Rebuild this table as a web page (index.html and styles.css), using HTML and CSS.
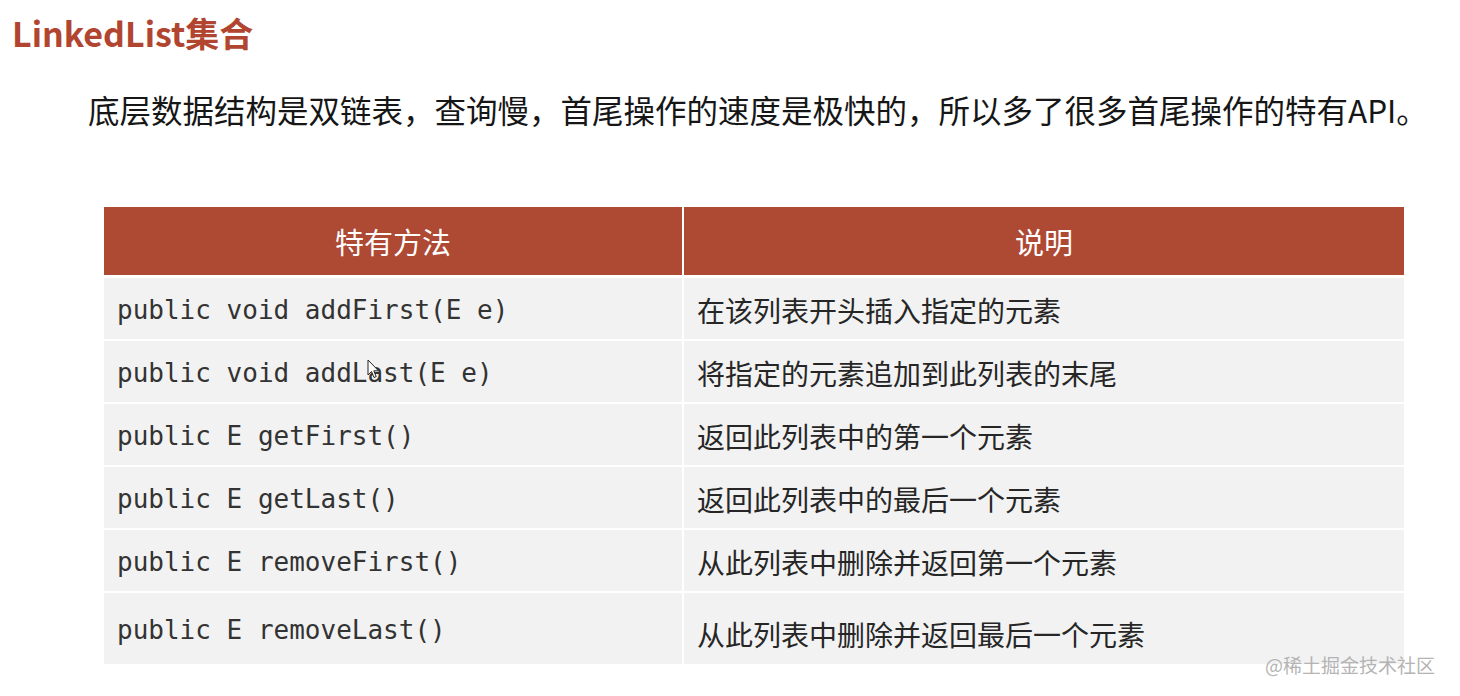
FILE: index.html
```html
<!DOCTYPE html>
<html lang="zh-CN">
<head>
<meta charset="utf-8">
<title>LinkedList集合</title>
<link rel="stylesheet" href="styles.css">
</head>
<body>
<div class="page">
  <h1 class="title">LinkedList集合</h1>
  <p class="lead">底层数据结构是双链表，查询慢，首尾操作的速度是极快的，所以多了很多首尾操作的特有API。</p>
  <div class="table">
    <div class="head">特有方法</div>
    <div class="head">说明</div>

    <div class="cell code">public void addFirst(E e)</div>
    <div class="cell desc">在该列表开头插入指定的元素</div>

    <div class="cell code">public void addLast(E e)</div>
    <div class="cell desc">将指定的元素追加到此列表的末尾</div>

    <div class="cell code">public E getFirst()</div>
    <div class="cell desc">返回此列表中的第一个元素</div>

    <div class="cell code">public E getLast()</div>
    <div class="cell desc">返回此列表中的最后一个元素</div>

    <div class="cell code">public E removeFirst()</div>
    <div class="cell desc">从此列表中删除并返回第一个元素</div>

    <div class="cell code last">public E removeLast()</div>
    <div class="cell desc last">从此列表中删除并返回最后一个元素</div>
  </div>
  <svg class="cursor" width="14" height="21" viewBox="0 0 14 21" aria-hidden="true">
    <path d="M1 1 L1 16 L4.5 12.5 L7 18.5 L9.2 17.6 L6.8 11.8 L11.5 11.8 Z" fill="#ffffff" stroke="#222222" stroke-width="1" stroke-linejoin="round"/>
  </svg>
  <div class="watermark">@稀土掘金技术社区</div>
</div>
</body>
</html>
```

FILE: styles.css
```css
html, body {
  margin: 0;
  padding: 0;
  background: #ffffff;
}

.page {
  position: relative;
  width: 1460px;
  height: 696px;
  overflow: hidden;
  font-family: "Noto Sans CJK SC", "Noto Sans", sans-serif;
}

.title {
  margin: 0;
  padding: 11px 0 0 12px;
  font-size: 34px;
  line-height: 44px;
  font-weight: 700;
  color: #b1452f;
}

.lead {
  margin: 32px 0 0 88px;
  font-size: 31.5px;
  line-height: 44px;
  color: #161616;
  white-space: nowrap;
}

.table {
  margin: 76px 0 0 104px;
  width: 1300px;
  display: grid;
  grid-template-columns: 578px 720px;
  grid-template-rows: 68px 62px repeat(4, 61px) 71px;
  column-gap: 2px;
  row-gap: 2px;
}

.head {
  background: #ae4934;
  color: #ffffff;
  font-size: 29px;
  display: flex;
  align-items: center;
  justify-content: center;
}

.cell {
  background: #f2f2f2;
  display: flex;
  align-items: center;
  padding-left: 13px;
  padding-top: 3px;
  box-sizing: border-box;
  color: #2b2b2b;
}

.table .cell:nth-child(3),
.table .cell:nth-child(4) {
  margin-top: 1px;
}

.code {
  font-family: "DejaVu Sans Mono", "Liberation Mono", monospace;
  font-size: 26px;
  color: #333333;
}

.desc {
  font-size: 28px;
  color: #262626;
}

.code.last {
  padding-top: 2px;
}

.desc.last {
  padding-top: 10px;
}

.cursor {
  position: absolute;
  left: 367px;
  top: 359px;
}

.watermark {
  position: absolute;
  left: 1265px;
  top: 652px;
  font-size: 19px;
  line-height: 26px;
  color: #b4b4b4;
  white-space: nowrap;
}
```
